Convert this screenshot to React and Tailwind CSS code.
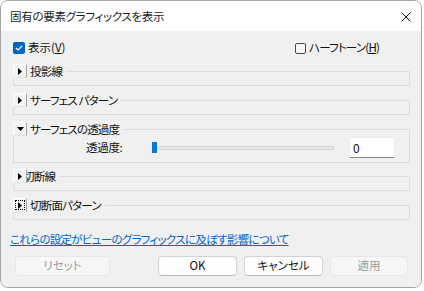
import React from 'react';

const font = { fontFamily: "'Noto Sans CJK JP', 'Noto Sans', sans-serif" };

function Toggle({ open, focus }) {
  return (
    <span className="relative z-10 flex h-[14px] w-[14px] shrink-0 items-center justify-center border-l border-t border-white border-r border-r-[#a3a3a3] border-b border-b-[#e2e2e2] bg-[#f3f3f3]">
      <span className={`flex h-[10px] w-[10px] items-center justify-center ${focus ? 'border border-dotted border-black' : ''}`}>
        {open ? (
          <svg width="7" height="4" viewBox="0 0 7 4"><polygon points="0,0 7,0 3.5,4" fill="#000" /></svg>
        ) : (
          <svg width="4" height="7" viewBox="0 0 4 7"><polygon points="0,0 4,3.5 0,7" fill="#000" /></svg>
        )}
      </span>
    </span>
  );
}

function Group({ title, open, focus, overlap, className = '', children }) {
  return (
    <fieldset className={`m-0 ml-[3px] w-[397px] min-w-0 border border-[#dcdcdc] p-0 ${open ? 'pb-[4px]' : 'pb-[7px]'} ${className}`}>
      <legend className="-ml-px flex items-center p-0 pr-[4px]">
        <Toggle open={open} focus={focus} />
        <span className={`whitespace-nowrap text-[11.5px] leading-[14px] tracking-[-0.8px] text-[#111] ${overlap ? '-ml-[4px]' : 'ml-[3px]'}`}>{title}</span>
      </legend>
      {children}
    </fieldset>
  );
}

function Button({ children, disabled, className = '' }) {
  return (
    <button
      className={`flex h-[20px] items-center justify-center rounded-[4px] border text-[11.5px] leading-none ${
        disabled
          ? 'border-[#e6e6e6] bg-[#f6f6f6] text-[#9b9b9b]'
          : 'border-[#d2d2d2] border-b-[#bdbdbd] bg-[#fdfdfd] text-[#111]'
      } ${className}`}
    >
      {children}
    </button>
  );
}

export default function App() {
  return (
    <div className="h-[291px] w-[424px] bg-white [font-feature-settings:'palt']" style={font}>
      <div className="flex h-[288px] w-[422px] flex-col overflow-hidden rounded-[8px] border border-[#a6a6a6]">
        {/* Title bar */}
        <div className="flex h-[30px] shrink-0 items-center justify-between bg-white pl-[9px] pr-[9px] pt-[1px]">
          <span className="text-[11.5px] tracking-[-0.3px] text-[#1a1a1a]">固有の要素グラフィックスを表示</span>
          <svg width="10" height="10" viewBox="0 0 10 10" className="mr-[1px]">
            <path d="M0.5 0.5 L9.5 9.5 M9.5 0.5 L0.5 9.5" stroke="#1a1a1a" strokeWidth="1" />
          </svg>
        </div>

        {/* Body */}
        <div className="flex flex-1 flex-col bg-[#f0f0f0] px-[9px] pt-[11px]">
          <div className="ml-[3px] flex h-[12px] items-center">
            <label className="flex w-[282px] items-center">
              <span className="flex h-[12px] w-[12px] items-center justify-center rounded-[2px] bg-[#0067c0]">
                <svg width="8" height="6" viewBox="0 0 8 6"><path d="M0.8 3 L3 5 L7.2 0.8" stroke="#fff" strokeWidth="1.2" fill="none" /></svg>
              </span>
              <span className="ml-[3px] text-[11.5px] leading-none text-[#111]">表示(<span className="underline">V</span>)</span>
            </label>
            <label className="flex items-center">
              <span className="h-[11px] w-[11px] rounded-[2px] border border-[#4a4a4a] bg-[#f6f6f6]" />
              <span className="ml-[3px] text-[11.5px] leading-none tracking-[-0.8px] text-[#111]">ハーフトーン(<span className="underline">H</span>)</span>
            </label>
          </div>

          <Group title="投影線" className="mt-[10px]" />
          <Group title="サーフェス パターン" className="mt-[7px]" />
          <Group title="サーフェスの透過度" open className="mt-[7px]">
            <div className="mt-[1px] flex h-[21px] items-center">
              <span className="ml-[72px] w-[38px] whitespace-nowrap text-[11.5px] leading-none tracking-[-0.3px] text-[#111]">透過度:</span>
              <div className="ml-[28px] flex h-[11px] w-[182px] items-center">
                <span className="h-[11px] w-[5px] shrink-0 bg-[#0078d4]" />
                <span className="h-[4px] flex-1 border border-[#d6d6d6] bg-[#e7e7e7]" />
              </div>
              <div className="ml-[15px] flex h-[21px] w-[46px] items-center border border-[#ececec] border-b-[#8a8a8a] bg-white pl-[3px] text-[12px] text-[#111]">
                0
              </div>
            </div>
          </Group>
          <Group title="切断線" overlap className="mt-[6px]" />
          <Group title="切断面パターン" focus className="mt-[7px]" />

          <a className="mt-[11px] whitespace-nowrap text-[11.5px] leading-[16px] tracking-[-0.7px] text-[#0066cc] underline">
            これらの設定がビューのグラフィックスに及ぼす影響について
          </a>

          <div className="mt-[9px] ml-[5px] flex items-center">
            <Button disabled className="w-[95px]">リセット</Button>
            <Button className="ml-[48px] w-[79px]">OK</Button>
            <Button className="ml-[7px] w-[79px]">キャンセル</Button>
            <Button disabled className="ml-[7px] w-[78px]">適用</Button>
          </div>
        </div>
      </div>
    </div>
  );
}
